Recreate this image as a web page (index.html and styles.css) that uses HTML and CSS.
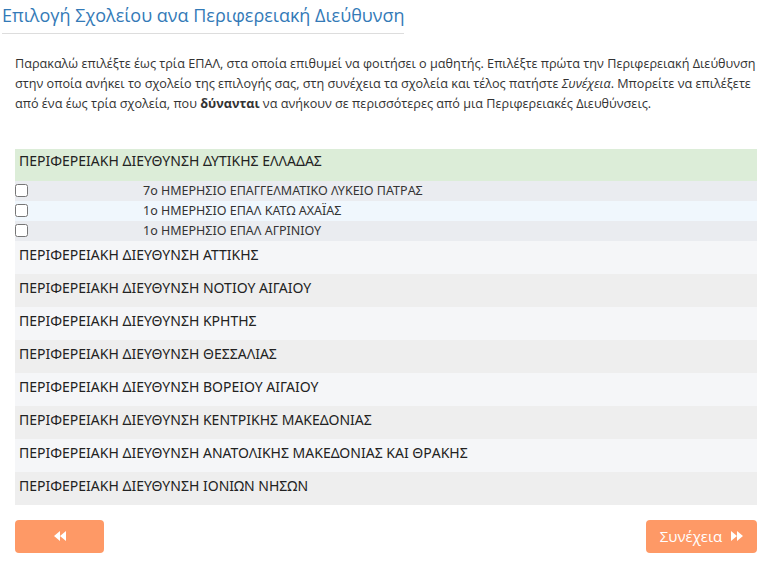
FILE: index.html
```html
<!DOCTYPE html>
<html lang="el">
<head>
<meta charset="utf-8">
<link rel="stylesheet" href="styles.css">
</head>
<body>
<div class="page">
  <h3 class="title">Επιλογή Σχολείου ανα Περιφερειακή Διεύθυνση</h3>
  <p class="intro">Παρακαλώ επιλέξτε έως τρία ΕΠΑΛ, στα οποία επιθυμεί να φοιτήσει ο μαθητής. Επιλέξτε πρώτα την Περιφερειακή Διεύθυνση στην οποία ανήκει το σχολείο της επιλογής σας, στη συνέχεια τα σχολεία και τέλος πατήστε <i>Συνέχεια</i>. Μπορείτε να επιλέξετε από ένα έως τρία σχολεία, που <b>δύνανται</b> να ανήκουν σε περισσότερες από μια Περιφερειακές Διευθύνσεις.</p>
  <div class="list">
    <div class="region active">ΠΕΡΙΦΕΡΕΙΑΚΗ ΔΙΕΥΘΥΝΣΗ ΔΥΤΙΚΗΣ ΕΛΛΑΔΑΣ</div>
    <div class="school odd"><input type="checkbox" class="cb"><span class="sname">7ο ΗΜΕΡΗΣΙΟ ΕΠΑΓΓΕΛΜΑΤΙΚΟ ΛΥΚΕΙΟ ΠΑΤΡΑΣ</span></div>
    <div class="school even"><input type="checkbox" class="cb"><span class="sname">1ο ΗΜΕΡΗΣΙΟ ΕΠΑΛ ΚΑΤΩ ΑΧΑΪΑΣ</span></div>
    <div class="school odd"><input type="checkbox" class="cb"><span class="sname">1ο ΗΜΕΡΗΣΙΟ ΕΠΑΛ ΑΓΡΙΝΙΟΥ</span></div>
    <div class="region light">ΠΕΡΙΦΕΡΕΙΑΚΗ ΔΙΕΥΘΥΝΣΗ ΑΤΤΙΚΗΣ</div>
    <div class="region dark">ΠΕΡΙΦΕΡΕΙΑΚΗ ΔΙΕΥΘΥΝΣΗ ΝΟΤΙΟΥ ΑΙΓΑΙΟΥ</div>
    <div class="region light">ΠΕΡΙΦΕΡΕΙΑΚΗ ΔΙΕΥΘΥΝΣΗ ΚΡΗΤΗΣ</div>
    <div class="region dark">ΠΕΡΙΦΕΡΕΙΑΚΗ ΔΙΕΥΘΥΝΣΗ ΘΕΣΣΑΛΙΑΣ</div>
    <div class="region light">ΠΕΡΙΦΕΡΕΙΑΚΗ ΔΙΕΥΘΥΝΣΗ ΒΟΡΕΙΟΥ ΑΙΓΑΙΟΥ</div>
    <div class="region dark">ΠΕΡΙΦΕΡΕΙΑΚΗ ΔΙΕΥΘΥΝΣΗ ΚΕΝΤΡΙΚΗΣ ΜΑΚΕΔΟΝΙΑΣ</div>
    <div class="region light">ΠΕΡΙΦΕΡΕΙΑΚΗ ΔΙΕΥΘΥΝΣΗ ΑΝΑΤΟΛΙΚΗΣ ΜΑΚΕΔΟΝΙΑΣ ΚΑΙ ΘΡΑΚΗΣ</div>
    <div class="region dark">ΠΕΡΙΦΕΡΕΙΑΚΗ ΔΙΕΥΘΥΝΣΗ ΙΟΝΙΩΝ ΝΗΣΩΝ</div>
  </div>
  <div class="actions">
    <button class="btn back" type="button" aria-label="Πίσω"><svg class="ico" viewBox="0 0 12 10" width="12" height="10"><path d="M6 0 L0 5 L6 10 Z M12 0 L6 5 L12 10 Z" fill="#fff"/></svg></button>
    <button class="btn next" type="button">Συνέχεια <svg class="ico" viewBox="0 0 12 10" width="12" height="10"><path d="M0 0 L6 5 L0 10 Z M6 0 L12 5 L6 10 Z" fill="#fff"/></svg></button>
  </div>
</div>
</body>
</html>
```
FILE: styles.css
```css
* { box-sizing: border-box; }
body {
  margin: 0;
  font-family: "Open Sans", "Noto Sans", sans-serif;
  color: #333;
  background: #fff;
}
.page {
  padding: 0 12px 0 15px;
}
.title {
  display: inline-block;
  margin: 3px 0 0 -13px;
  padding: 0 0 6px 0;
  width: 402px;
  font-size: 18px;
  font-weight: 400;
  line-height: 24px;
  white-space: nowrap;
  color: #337ab7;
  border-bottom: 1px solid #ddd;
}
.intro {
  margin: 19px 0 0 0;
  font-size: 12.65px;
  line-height: 20px;
}
.list {
  margin-top: 35.5px;
  font-family: "Noto Sans", "Open Sans", sans-serif;
}
.region {
  height: 33px;
  padding: 4px 4px 0;
  line-height: 19px;
  font-size: 14px;
  color: #222;
}
.region.active {
  background: #dcedd8;
  height: 32px;
  padding-top: 2px;
}
.region.light { background: #f5f6f8; }
.region.dark { background: #eeeeee; }
.school {
  height: 20px;
  display: flex;
  align-items: center;
  font-size: 12.5px;
  color: #333;
}
.school.odd { background: #eaecf0; }
.school.even { background: #f0f7fd; }
.cb {
  margin: 0;
  width: 13px;
  height: 13px;
}
.sname {
  margin-left: 115px;
}
.actions {
  display: flex;
  justify-content: space-between;
  margin-top: 15px;
}
.btn {
  height: 33px;
  border: none;
  border-radius: 4px;
  background: #fe9966;
  color: #fff;
  font-family: "Open Sans", sans-serif;
  font-size: 15px;
  display: flex;
  align-items: center;
  justify-content: center;
  gap: 9px;
  padding: 0;
}
.btn.back { width: 89px; }
.btn.next { width: 111px; }
.ico { display: block; }
```
